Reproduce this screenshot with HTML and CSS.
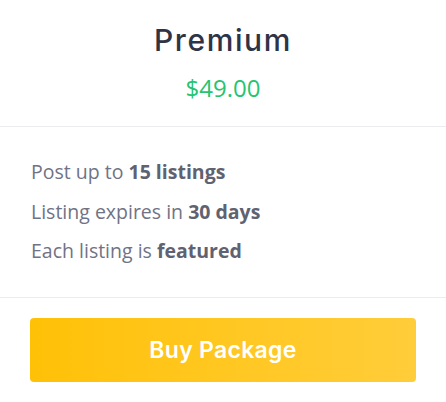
FILE: index.html
```html
<!DOCTYPE html>
<html lang="en">
<head>
<meta charset="utf-8">
<title>Premium package</title>
<link rel="stylesheet" href="styles.css">
</head>
<body>
<div class="card">
  <div class="card-head">
    <h2 class="plan-name">Premium</h2>
    <div class="plan-price">$49.00</div>
  </div>
  <ul class="features">
    <li>Post up to <strong>15 listings</strong></li>
    <li>Listing expires in <strong>30 days</strong></li>
    <li>Each listing is <strong>featured</strong></li>
  </ul>
  <div class="card-foot">
    <button class="buy-btn" type="button">Buy Package</button>
  </div>
</div>
</body>
</html>
```
FILE: styles.css
```css
* { box-sizing: border-box; }
html, body { margin: 0; padding: 0; background: #fff; }
body { font-family: "Open Sans", "Liberation Sans", sans-serif; }
.card { width: 446px; }
.card-head {
  text-align: center;
  padding: 20px 0 22px;
  border-bottom: 1px solid #ececf0;
}
.plan-name {
  margin: 0;
  font-family: Inter, "Open Sans", sans-serif;
  font-weight: 500;
  font-size: 30px;
  line-height: 40px;
  color: #2e3346;
  letter-spacing: 1.6px;
}
.plan-price {
  margin-top: 12px;
  font-size: 24px;
  line-height: 32px;
  color: #27c46f;
}
.features {
  list-style: none;
  margin: 0;
  padding: 25px 31px 26px;
  border-bottom: 1px solid #ececf0;
}
.features li {
  font-size: 19.5px;
  line-height: 39.5px;
  color: #707385;
}
.features strong { font-weight: 700; color: #5f6270; }
.card-foot { padding: 20px 30px; }
.buy-btn {
  display: block;
  width: 100%;
  height: 64px;
  border: 0;
  border-radius: 4px;
  background: linear-gradient(90deg, #ffc107 0%, #ffcd3a 100%);
  color: #fff;
  font-family: Inter, "Open Sans", sans-serif;
  font-weight: 600;
  font-size: 23px;
  letter-spacing: 0.3px;
  cursor: pointer;
}
```
